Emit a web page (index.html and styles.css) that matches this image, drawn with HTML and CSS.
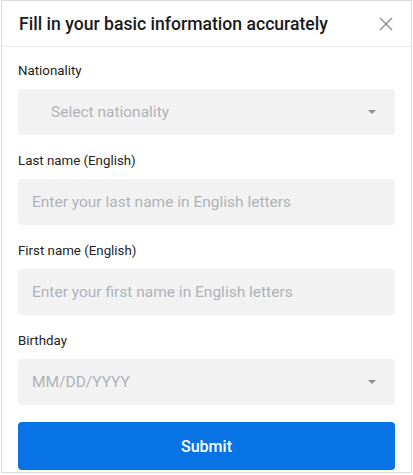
FILE: index.html
```html
<!DOCTYPE html>
<html lang="en">
<head>
<meta charset="utf-8">
<title>Basic information</title>
<link rel="stylesheet" href="styles.css">
</head>
<body>
<div class="card">
  <div class="header">
    <h1 class="title">Fill in your basic information accurately</h1>
    <svg class="close" width="14" height="14" viewBox="0 0 14 14"><path d="M1 1L13 13M13 1L1 13" stroke="#8a8e96" stroke-width="1.4" fill="none"/></svg>
  </div>
  <div class="form">
    <div class="group first">
      <div class="label">Nationality</div>
      <div class="field select nat"><span class="ph">Select nationality</span><span class="caret"></span></div>
    </div>
    <div class="group">
      <div class="label">Last name (English)</div>
      <div class="field"><span class="ph">Enter your last name in English letters</span></div>
    </div>
    <div class="group">
      <div class="label">First name (English)</div>
      <div class="field"><span class="ph">Enter your first name in English letters</span></div>
    </div>
    <div class="group">
      <div class="label">Birthday</div>
      <div class="field select"><span class="ph">MM/DD/YYYY</span><span class="caret"></span></div>
    </div>
    <button class="submit">Submit</button>
  </div>
</div>
</body>
</html>
```
FILE: styles.css
```css
* { box-sizing: border-box; }
body {
  margin: 0;
  background: #fff;
  font-family: Roboto, "Liberation Sans", sans-serif;
}
.card {
  margin-left: 1px;
  width: 411px;
  height: 473px;
  border: 1px solid #dcdcdc;
  background: #fff;
  display: flex;
  flex-direction: column;
}
.header {
  height: 46px;
  flex: none;
  border-bottom: 1px solid #e9e9e9;
  display: flex;
  align-items: center;
  justify-content: space-between;
  padding: 0 17px 0 17px;
}
.title {
  margin: 0;
  font-size: 17.6px;
  font-weight: 500;
  color: #1a1a1a;
}
.close { display: block; margin-right: 1px; }
.form {
  padding: 0 16px 0 16px;
  display: flex;
  flex-direction: column;
}
.group { padding-top: 16px; }
.group.first { padding-top: 14px; }
.label {
  font-size: 13.3px;
  line-height: 20px;
  color: #222;
  margin-bottom: 8px;
}
.field {
  height: 46px;
  background: #f2f2f2;
  border-radius: 4px;
  display: flex;
  align-items: center;
  justify-content: space-between;
  padding: 0 19px 0 14px;
}
.field.nat { padding-left: 33px; }
.ph {
  font-size: 15.5px;
  color: #b0b2b8;
}
.caret {
  width: 0;
  height: 0;
  border-left: 4px solid transparent;
  border-right: 4px solid transparent;
  border-top: 4px solid #8a8e96;
}
.submit {
  margin-top: 17px;
  height: 48px;
  border: none;
  border-radius: 4px;
  background: #0873e4;
  color: #fff;
  font-family: Roboto, "Liberation Sans", sans-serif;
  font-size: 16px;
  font-weight: 500;
}
```
